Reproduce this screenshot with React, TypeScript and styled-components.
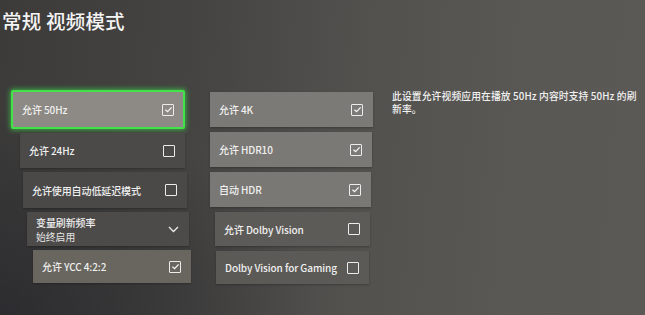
import React from 'react'
import styled, {createGlobalStyle} from 'styled-components'

const GlobalStyle = createGlobalStyle`
    html, body {
        margin: 0;
        padding: 0;
    }
    body {
        width: 645px;
        height: 315px;
        overflow: hidden;
        font-family: "Noto Sans CJK SC", "Noto Sans", sans-serif;
        color: #efefef;
    }
`

type Item = {
    label: string
    checked: boolean
    bg: string
    indent: number
    trim: number
    height: number
}

const leftItems: Item[] = [
    {label: "允许 24Hz", checked: false, bg: "#4b4a49", indent: 9, trim: 6, height: 35},
    {label: "允许使用自动低延迟模式", checked: false, bg: "#4a4948", indent: 12, trim: 4, height: 36},
]

const rightItems: Item[] = [
    {label: "允许 4K", checked: true, bg: "#7c7a76", indent: 0, trim: 0, height: 35},
    {label: "允许 HDR10", checked: true, bg: "#7b7975", indent: 0, trim: 1, height: 35},
    {label: "自动 HDR", checked: true, bg: "#7a7874", indent: 0, trim: 2, height: 35},
    {label: "允许 Dolby Vision", checked: false, bg: "#5d5b58", indent: 5, trim: 3, height: 34},
    {label: "Dolby Vision for Gaming", checked: false, bg: "#5c5a57", indent: 6, trim: 4, height: 33},
]

const Check = ({checked}: {checked: boolean}) => (
    <Box>
        {checked && (
            <svg width="9" height="9" viewBox="0 0 10 10">
                <polyline points="1.6,5.2 4,7.4 8.5,2.6" fill="none" stroke="#f2f2f2" strokeWidth="1.5" />
            </svg>
        )}
    </Box>
)

const App = () => {
  return (
      <Page>
          <GlobalStyle />
          <Title>常规 视频模式</Title>
          <Main>
              <LeftCol>
                  <Focused>
                      <Label>允许 50Hz</Label>
                      <Check checked={true} />
                  </Focused>
                  {leftItems.map((it) => (
                      <Tile key={it.label} $bg={it.bg} $indent={it.indent} $trim={it.trim} $h={it.height}>
                          <Label>{it.label}</Label>
                          <Check checked={it.checked} />
                      </Tile>
                  ))}
                  <Tile $bg="#4d4b4a" $indent={16} $trim={2} $h={34}>
                      <Stack>
                          <Label>变量刷新频率</Label>
                          <Sub>始终启用</Sub>
                      </Stack>
                      <svg width="11" height="7" viewBox="0 0 11 7">
                          <polyline points="1,1 5.5,5.5 10,1" fill="none" stroke="#ededed" strokeWidth="1.3" />
                      </svg>
                  </Tile>
                  <Tile $bg="#69665f" $indent={22} $trim={0} $h={33}>
                      <Label>允许 YCC 4:2:2</Label>
                      <Check checked={true} />
                  </Tile>
              </LeftCol>
              <RightCol>
                  {rightItems.map((it) => (
                      <Tile key={it.label} $bg={it.bg} $indent={it.indent} $trim={it.trim} $h={it.height}>
                          <Label>{it.label}</Label>
                          <Check checked={it.checked} />
                      </Tile>
                  ))}
              </RightCol>
              <Desc>此设置允许视频应用在播放 50Hz 内容时支持 50Hz 的刷新率。</Desc>
          </Main>
      </Page>
  )
}

export default App

const Page = styled.div`
    width: 645px;
    height: 315px;
    box-sizing: border-box;
    background:
        radial-gradient(ellipse 320px 200px at 0px 315px, rgba(30, 29, 36, 0.55), rgba(30, 29, 36, 0) 100%),
        linear-gradient(95deg, #3c3b3a 0%, #454442 30%, #52514e 55%, #5a5855 80%, #5b5956 100%);
`
const Title = styled.div`
    padding: 8px 0 0 2px;
    height: 30px;
    font-size: 19.5px;
    font-weight: 500;
    line-height: 26px;
    letter-spacing: 0.2px;
    color: #f4f4f4;
`
const Main = styled.div`
    display: flex;
    align-items: flex-start;
    padding-top: 52px;
`
const LeftCol = styled.div`
    width: 180px;
    margin-left: 11px;
    display: flex;
    flex-direction: column;
    gap: 4px;
`
const RightCol = styled.div`
    width: 163px;
    margin-left: 19px;
    margin-top: 2px;
    display: flex;
    flex-direction: column;
    gap: 5px;
`
const Tile = styled.div<{$bg: string, $indent: number, $trim: number, $h: number}>`
    height: ${({$h}) => $h}px;
    margin-left: ${({$indent}) => $indent}px;
    margin-right: ${({$trim}) => $trim}px;
    background-color: ${({$bg}) => $bg};
    display: flex;
    align-items: center;
    justify-content: space-between;
    padding: 0 10px 0 9px;
    box-sizing: border-box;
    box-shadow: 0 1px 2px rgba(0, 0, 0, 0.25);
`
const Focused = styled.div`
    width: 174px;
    height: 39px;
    box-sizing: border-box;
    background-color: #8d8a85;
    border: 2px solid #43e24a;
    border-radius: 2px;
    box-shadow: 0 0 5px 1px rgba(60, 230, 70, 0.65);
    display: flex;
    align-items: center;
    justify-content: space-between;
    padding: 0 9px 0 9px;
`
const Label = styled.span`
    font-size: 10px;
    font-weight: 500;
    letter-spacing: -0.1px;
    white-space: nowrap;
    color: #f0f0f0;
`
const Sub = styled.span`
    font-size: 9.8px;
    color: #e6e6e6;
`
const Stack = styled.div`
    display: flex;
    flex-direction: column;
    line-height: 15px;
    padding-top: 2px;
`
const Box = styled.div`
    width: 12px;
    height: 12px;
    box-sizing: border-box;
    border: 1.5px solid #ececec;
    border-radius: 1px;
    display: flex;
    align-items: center;
    justify-content: center;
`
const Desc = styled.div`
    width: 250px;
    margin-left: 19px;
    font-size: 9.8px;
    font-weight: 500;
    line-height: 13px;
    letter-spacing: 0.1px;
    color: #f2f2f2;
`
